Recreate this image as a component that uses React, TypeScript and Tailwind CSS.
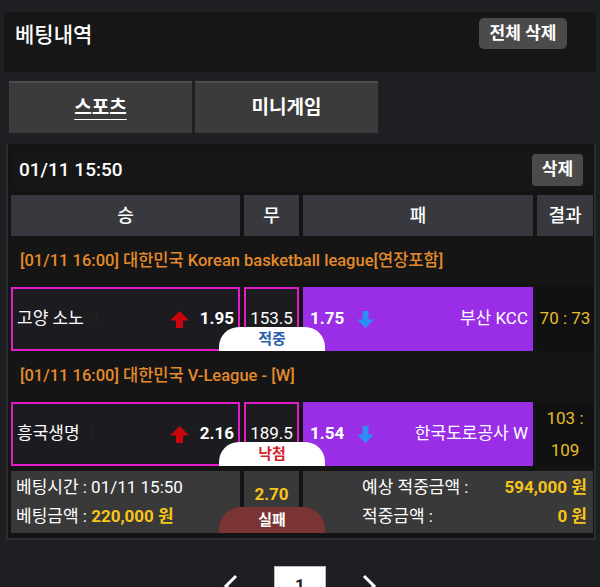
import React from "react";

const font = { fontFamily: "Roboto, 'Noto Sans CJK KR', sans-serif" };

function UpArrow() {
  return (
    <svg width="21" height="19" viewBox="0 0 21 19" className="shrink-0">
      <path d="M10.5 1 L20 10.5 L14 10.5 L14 18 L7 18 L7 10.5 L1 10.5 Z" fill="#c8060b" />
    </svg>
  );
}

function DownArrow() {
  return (
    <svg width="19" height="19" viewBox="0 0 19 19" className="shrink-0">
      <path d="M9.5 18 L18 9.5 L12.5 9.5 L12.5 1 L6.5 1 L6.5 9.5 L1 9.5 Z" fill="#2b8ff2" />
    </svg>
  );
}

type Match = {
  league: string;
  home: string;
  homeOdd: string;
  draw: string;
  awayOdd: string;
  away: string;
  result: React.ReactNode;
  badge: string;
  badgeColor: string;
};

const matches: Match[] = [
  {
    league: "[01/11 16:00] 대한민국 Korean basketball league[연장포함]",
    home: "고양 소노",
    homeOdd: "1.95",
    draw: "153.5",
    awayOdd: "1.75",
    away: "부산 KCC",
    result: <span>70 : 73</span>,
    badge: "적중",
    badgeColor: "text-[#2b5ea9]",
  },
  {
    league: "[01/11 16:00] 대한민국 V-League - [W]",
    home: "흥국생명",
    homeOdd: "2.16",
    draw: "189.5",
    awayOdd: "1.54",
    away: "한국도로공사 W",
    result: (
      <span className="text-center leading-[32px]">
        103 :<br />109
      </span>
    ),
    badge: "낙첨",
    badgeColor: "text-[#d3242c]",
  },
];

function MatchBlock({ m }: { m: Match }) {
  return (
    <div className="flex flex-col">
      <div className="h-[42px] mt-[4px] bg-[#151515] flex items-center pl-[9px] text-[16.5px] font-medium text-[#e38a2c]">
        {m.league}
      </div>
      <div className="mt-[5px] grid grid-cols-[229px_55px_230px_56px] gap-x-[4px] h-[64px] relative">
        <div className="border-2 border-[#e31bc9] bg-[#1c1c20] flex items-center pl-[4px] pr-[4px] text-[17px] text-white">
          <span>{m.home}</span>
          <span className="ml-[6px] text-[12px] text-[#3a1a1c]">↑</span>
          <span className="flex-1" />
          <UpArrow />
          <span className="ml-[10px] font-bold text-[17px]">{m.homeOdd}</span>
        </div>
        <div className="border-2 border-[#e31bc9] bg-[#1c1c20] flex items-center justify-center text-[17px] text-white pb-[1px]">
          {m.draw}
        </div>
        <div className="bg-[#9a2ee6] flex items-center pl-[7px] pr-[5px] text-[17px] text-white">
          <span className="font-bold text-[17px]">{m.awayOdd}</span>
          <span className="ml-[12px]">
            <DownArrow />
          </span>
          <span className="flex-1" />
          <span>{m.away}</span>
        </div>
        <div className="bg-[#101010] flex items-center justify-center text-[17px] text-[#e6bd2a]">
          {m.result}
        </div>
        <div
          className={`absolute left-[208px] bottom-0 w-[106px] h-[24px] bg-white rounded-t-[20px] flex items-center justify-center font-bold text-[15px] ${m.badgeColor}`}
        >
          {m.badge}
        </div>
      </div>
    </div>
  );
}

export default function App() {
  return (
    <div className="w-[600px] h-[587px] overflow-hidden bg-[#1e1f23] pt-[12px]" style={font}>
      <div className="mx-[4px] h-[60px] bg-[#161616] flex items-start justify-between">
        <div className="pl-[11px] pt-[8px] text-[21px] font-medium text-white">베팅내역</div>
        <button className="mt-[6px] mr-[29px] w-[88px] h-[31px] rounded-[5px] bg-[#4b4b4b] text-white font-bold text-[17px] flex items-center justify-center">
          전체 삭제
        </button>
      </div>

      <div className="mt-[9px] pl-[9px] flex gap-[3px]">
        <div className="w-[183px] h-[52px] bg-[#3b3b3b] border-t-2 border-[#4c4c4c] flex items-center justify-center text-white font-bold text-[19px] underline underline-offset-[5px]">
          스포츠
        </div>
        <div className="w-[183px] h-[52px] bg-[#3b3b3b] border-t-2 border-[#4c4c4c] flex items-center justify-center text-white font-bold text-[19px]">
          미니게임
        </div>
      </div>

      <div className="mt-[11px] ml-[6px] w-[590px] h-[396px] bg-[#141414] border-l-2 border-r-2 border-b-2 border-[#2c2d31] px-[3px] pt-[6px]">
        <div className="h-[40px] bg-[#161616] flex items-center justify-between pl-[8px] pr-[8px]">
          <span className="text-[19px] font-medium text-white">01/11 15:50</span>
          <button className="w-[51px] h-[32px] rounded-[4px] bg-[#4b4b4b] text-white font-bold text-[17px] flex items-center justify-center">
            삭제
          </button>
        </div>

        <div className="mt-[5px] grid grid-cols-[229px_55px_230px_56px] gap-x-[4px] h-[41px]">
          <div className="bg-[#38393e] flex items-center justify-center text-white text-[18px] font-medium">승</div>
          <div className="bg-[#38393e] flex items-center justify-center text-white text-[18px] font-medium">무</div>
          <div className="bg-[#38393e] flex items-center justify-center text-white text-[18px] font-medium">패</div>
          <div className="bg-[#38393e] flex items-center justify-center text-white text-[18px] font-medium">결과</div>
        </div>

        {matches.map((m, i) => (
          <MatchBlock key={i} m={m} />
        ))}

        <div className="mt-[5px] grid grid-cols-[229px_55px_290px] gap-x-[4px] h-[62px] relative">
          <div className="bg-[#393939] flex flex-col justify-center pl-[5px] text-[17px] text-white leading-[29px]">
            <span>베팅시간 : 01/11 15:50</span>
            <span>
              베팅금액 : <span className="text-[#f5c518] font-bold">220,000 원</span>
            </span>
          </div>
          <div className="bg-[#393939] flex justify-center pt-[11px] text-[17px] font-bold text-[#f5c518]">
            2.70
          </div>
          <div className="bg-[#393939] flex flex-col justify-center pl-[59px] pr-[6px] text-[17px] text-white leading-[29px]">
            <div className="flex justify-between">
              <span>예상 적중금액 :</span>
              <span className="text-[#f5c518] font-bold">594,000 원</span>
            </div>
            <div className="flex justify-between">
              <span>적중금액 :</span>
              <span className="text-[#f5c518] font-bold">0 원</span>
            </div>
          </div>
          <div className="absolute left-[208px] bottom-0 w-[106px] h-[26px] bg-[#7a3434] rounded-t-[22px] flex items-center justify-center font-bold text-[15px] text-white">
            실패
          </div>
        </div>
      </div>

      <div className="mt-[26px] flex items-start justify-center">
        <svg width="20" height="22" viewBox="0 0 20 22" className="mt-[8px] mr-[34px]">
          <polyline points="16,2 6,12 16,22" fill="none" stroke="white" strokeWidth="3" />
        </svg>
        <div className="w-[52px] h-[40px] bg-white border border-[#bbb] flex justify-center pt-[6px] text-[17px] font-bold text-[#222]">
          1
        </div>
        <svg width="20" height="22" viewBox="0 0 20 22" className="mt-[8px] ml-[34px]">
          <polyline points="4,2 14,12 4,22" fill="none" stroke="white" strokeWidth="3" />
        </svg>
      </div>
    </div>
  );
}
